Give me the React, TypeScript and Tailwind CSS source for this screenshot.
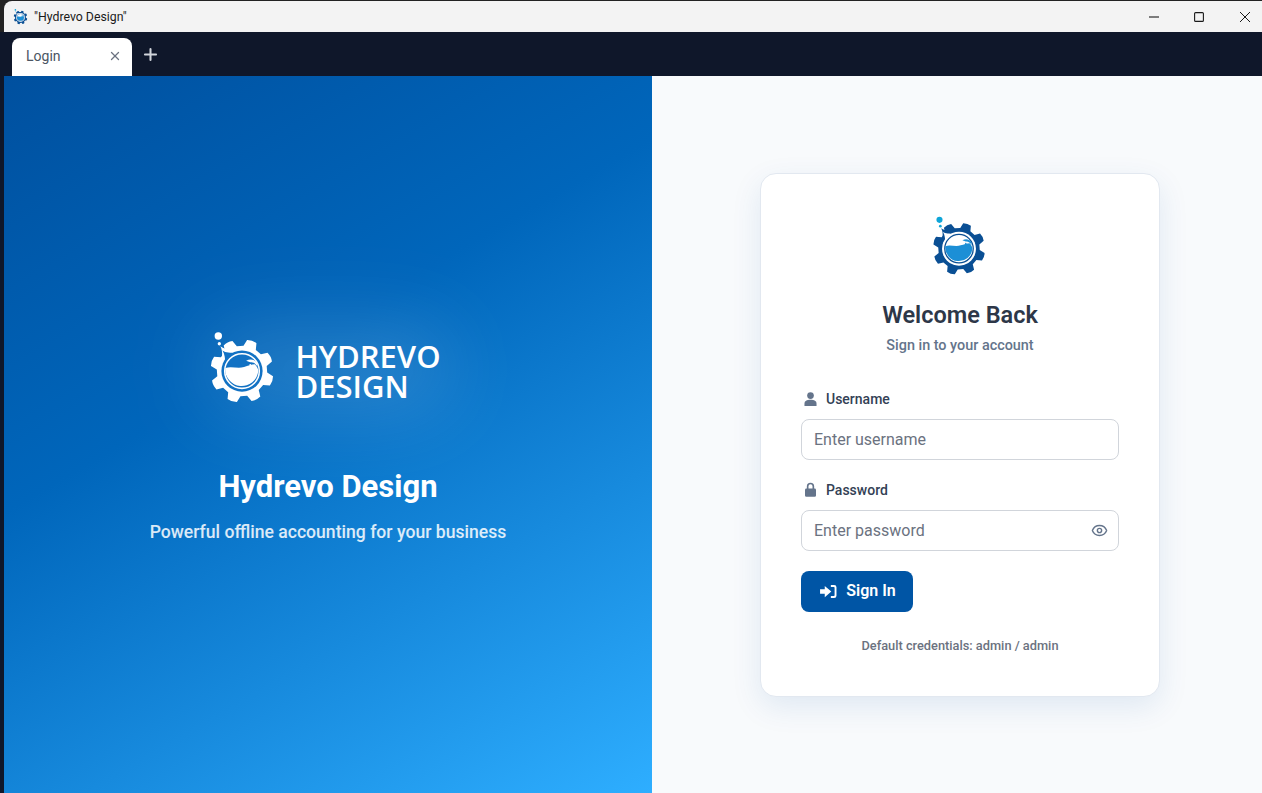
import { useState } from "react";
import { Eye, Plus, X } from "lucide-react";

// gear outline, 8 teeth round the flask
const gearPath = (() => {
  const teeth = 8;
  const cx = 33;
  const cy = 38;
  const pts: string[] = [];
  const p = (r: number, t: number) => `${(cx + r * Math.cos(t)).toFixed(2)} ${(cy + r * Math.sin(t)).toFixed(2)}`;
  for (let i = 0; i < teeth; i++) {
    const w = (2 * Math.PI) / teeth;
    const a = i * w - Math.PI / 2 + 0.32;
    pts.push(`${i === 0 ? "M" : "L"}${p(24.5, a - w * 0.33)}`);
    pts.push(`L${p(30.5, a - w * 0.2)}`);
    pts.push(`Q${p(31.8, a)} ${p(30.5, a + w * 0.2)}`);
    pts.push(`L${p(24.5, a + w * 0.33)}`);
  }
  return pts.join(" ") + "Z";
})();

function GearLogo({ gear, hole, ring, water, dot, className }: { gear: string; hole: string; ring: string; water: string; dot: string; className: string }) {
  return (
    <svg viewBox="0 0 66 72" className={className}>
      <path d={gearPath} fill={gear} />
      <circle cx="10" cy="4" r="3.600" fill={dot} />
      <circle cx="11" cy="11.500" r="1.600" fill={dot} />
      {/* flask neck: tail of the gear running up to the tip near the dots */}
      <path d="M12 14 C17 18 24 17 32 18 L32 24 L10 34 C14 26 15 20 12 14Z" fill={gear} />
      <path d="M14 18 C17 20.500 22 20 27 20.500 L17 31 C16.500 26 16.500 22 14 18Z" fill={hole} />
      <circle cx="33" cy="38" r="20" fill={hole} />
      <circle cx="33" cy="38" r="16.800" fill="none" stroke={ring} strokeWidth="1.500" />
      <path d="M16.800 35 C23 33 29 36 35 34 C39 33 42 31.500 45.500 31.500 C47.500 33.500 48.700 36 48.800 38 A15.800 15.800 0 1 1 16.800 35Z" fill={water} />
      <path d="M37 28 C41 26 45 26.500 47.500 30 L48 33.500 C46 30.500 43.500 29 41 29.500Z" fill={water} />
      <circle cx="41" cy="32" r="0.900" fill={water} />
    </svg>
  );
}

export default function App() {
  const [show, setShow] = useState(false);

  return (
    <div className="w-full h-[793px] flex flex-col overflow-hidden bg-[#0f172a] font-['Roboto',sans-serif]">
      {/* window title bar */}
      <div className="h-8 shrink-0 bg-[#222]">
        <div className="h-full flex items-center bg-[#f3f3f3] mt-px ml-1 rounded-tl-lg pl-[9px]">
          <GearLogo gear="#0a4f94" hole="#ffffff" ring="#0a4f94" water="#1c8fd6" dot="#0ea5d8" className="w-[15px] h-4" />
          <span className="ml-[6px] text-[12.3px] text-[#1a1a1a]">"Hydrevo Design"</span>
          <div className="ml-auto flex items-center pr-[1px]">
            <svg viewBox="0 0 10 10" className="w-[10px] h-[10px] mr-[35px]"><path d="M0 5h10" stroke="#1a1a1a" strokeWidth="1.1" /></svg>
            <svg viewBox="0 0 10 10" className="w-[10px] h-[10px] mr-[36px]"><rect x=".6" y=".6" width="8.800" height="8.800" rx="1" fill="none" stroke="#1a1a1a" strokeWidth="1.1" /></svg>
            <svg viewBox="0 0 10 10" className="w-[10px] h-[10px] mr-[11px]"><path d="M0 0l10 10M10 0L0 10" stroke="#1a1a1a" strokeWidth="1" /></svg>
          </div>
        </div>
      </div>

      {/* tab strip */}
      <div className="h-11 shrink-0 bg-[#0f172a] flex items-end pl-3">
        <div className="w-[120px] h-[38px] bg-white rounded-t-lg flex items-center justify-between pl-[14px] pr-[10px] pb-[2px]">
          <span className="text-sm text-[#4b5563]">Login</span>
          <X size={14} color="#6b7280" strokeWidth={2.2} />
        </div>
        <div className="h-[38px] flex items-center ml-[9px] pb-[5px]">
          <Plus size={19} color="#d1d5db" strokeWidth={2.6} />
        </div>
      </div>

      <div className="flex-1 flex pl-1 min-h-0">
        {/* brand panel */}
        <div className="w-[648px] shrink-0 flex flex-col items-center justify-center pt-2 bg-[linear-gradient(150deg,#00509f_0%,#0066bb_40%,#2eaeff_100%)]">
          <div className="relative flex items-center pr-[7px]">
            <div className="absolute -inset-1 bg-white/15 blur-2xl rounded-full" />
            <GearLogo gear="#ffffff" hole="#1272c4" ring="#ffffff" water="#ffffff" dot="#ffffff" className="relative w-[68px] h-[76px]" />
            <div className="relative ml-[19px] mt-[3px] text-[31px] leading-[30px] font-semibold text-white font-['Open_Sans',sans-serif]">
              <div>HYDREVO</div>
              <div>DESIGN</div>
            </div>
          </div>
          <h1 className="mt-[56px] text-[31px] leading-[48px] font-bold text-white">Hydrevo Design</h1>
          <p className="mt-2 text-[17.6px] font-medium text-white/85">Powerful offline accounting for your business</p>
        </div>

        {/* login side */}
        <div className="flex-1 flex items-center justify-center bg-[#f8fafc] pl-[6px]">
          <div className="w-[400px] h-[524px] bg-white border border-[#e2e8f0] rounded-2xl shadow-[0_10px_30px_rgba(0,81,159,0.1)] px-10 pt-[42px]">
            <div className="flex justify-center pr-[2px]">
              <GearLogo gear="#0a4f94" hole="#ffffff" ring="#0a4f94" water="#1c8fd6" dot="#0ea5d8" className="w-[56px] h-[62px]" />
            </div>
            <h2 className="mt-[19px] text-center text-[23.5px] leading-9 font-semibold text-[#2d3748]">Welcome Back</h2>
            <p className="mt-[3px] text-center text-[14.4px] leading-5 font-medium text-[#64748b]">Sign in to your account</p>

            <label className="mt-[33px] flex items-center gap-[7px] text-sm leading-5 font-medium text-[#334155]">
              <span className="w-[18px] flex justify-center">
                <svg viewBox="0 0 14 15" className="w-[13px] h-[14px]" fill="#64748b">
                  <circle cx="7" cy="3.800" r="3.600" />
                  <path d="M0.500 15v-2.500C0.500 9.500 3 8.300 7 8.300s6.500 1.200 6.500 4.200V15Z" />
                </svg>
              </span>
              Username
            </label>
            <input placeholder="Enter username" className="mt-[10px] block w-full h-[41px] rounded-lg border border-[#d1d5db] px-3 text-base placeholder:text-[#6b7280] outline-none" />

            <label className="mt-[20px] flex items-center gap-[7px] text-sm leading-5 font-medium text-[#334155]">
              <span className="w-[18px] flex justify-center">
                <svg viewBox="0 0 12 16" className="w-[11px] h-[15px]" fill="#64748b">
                  <path d="M2 7V4.500a4 4 0 0 1 8 0V7h.5A1.500 1.500 0 0 1 12 8.500v6a1.500 1.500 0 0 1-1.500 1.500h-9A1.500 1.500 0 0 1 0 14.500v-6A1.500 1.500 0 0 1 1.500 7ZM3.800 7h4.400V4.500a2.200 2.200 0 0 0-4.400 0Z" />
                </svg>
              </span>
              Password
            </label>
            <div className="relative mt-[10px]">
              <input type={show ? "text" : "password"} placeholder="Enter password" className="block w-full h-[41px] rounded-lg border border-[#d1d5db] pl-3 pr-10 text-base placeholder:text-[#6b7280] outline-none" />
              <button type="button" onClick={() => setShow(!show)} className="absolute right-[11px] top-[12px]">
                <Eye size={17} color="#64748b" />
              </button>
            </div>

            <button type="button" className="mt-[20px] w-28 h-[41px] rounded-lg bg-[#0055a5] text-white font-semibold text-base flex items-center justify-center gap-[9px] pl-[2px]">
              <svg viewBox="0 0 18 16" className="w-[17px] h-[15px]" fill="white">
                <path d="M0 5.500h5V2l7 6-7 6v-3.500H0zM11.500 1H15a2.500 2.500 0 0 1 2.500 2.500v9A2.500 2.500 0 0 1 15 15h-3.500v-2.200h3.200a.8.8 0 0 0 .8-.8V4a.8.8 0 0 0-.8-.8h-3.200z" />
              </svg>
              Sign In
            </button>

            <p className="mt-[24px] text-center text-[12.8px] leading-5 font-medium text-[#6b7280]">Default credentials: admin / admin</p>
          </div>
        </div>
      </div>
    </div>
  );
}
